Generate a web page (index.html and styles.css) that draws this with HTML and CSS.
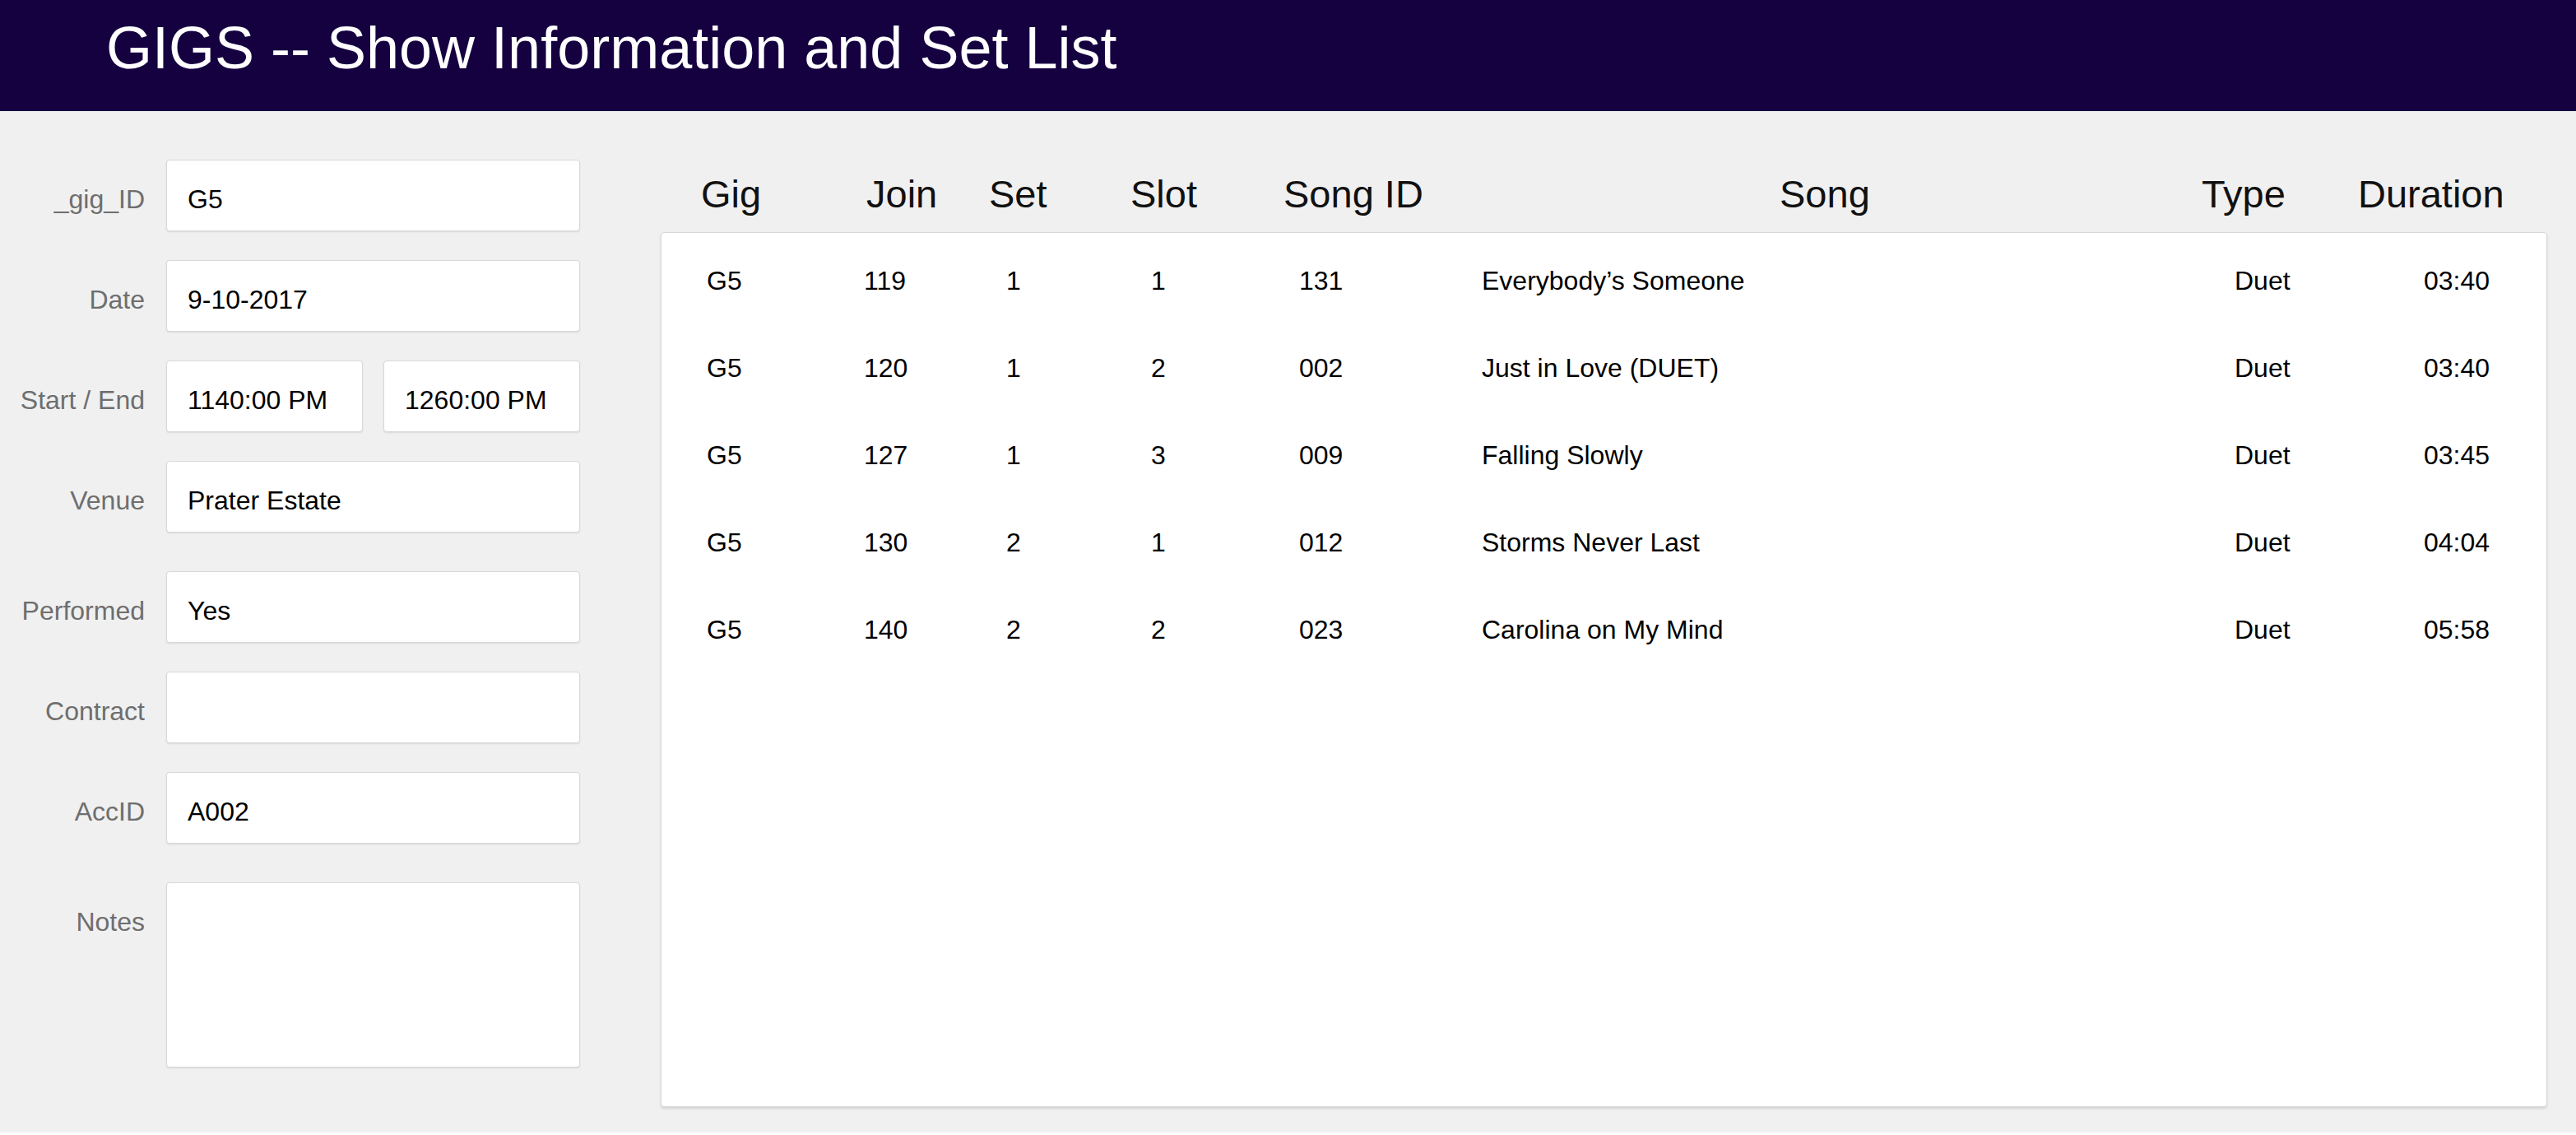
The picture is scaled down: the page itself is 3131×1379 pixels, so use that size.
FILE: index.html
```html
<!DOCTYPE html>
<html lang="en">
<head>
<meta charset="utf-8">
<title>GIGS -- Show Information and Set List</title>
<link rel="stylesheet" href="styles.css">
</head>
<body>
<div class="app">
  <header class="topbar">
    <h1 class="title">GIGS -- Show Information and Set List</h1>
  </header>
  <main class="main">
    <section class="form">
      <div class="label">_gig_ID</div>
      <div class="field">G5</div>

      <div class="label">Date</div>
      <div class="field">9-10-2017</div>

      <div class="label">Start / End</div>
      <div class="pair">
        <div class="field">1140:00 PM</div>
        <div class="field">1260:00 PM</div>
      </div>

      <div class="label">Venue</div>
      <div class="field">Prater Estate</div>

      <div class="label gap-lg">Performed</div>
      <div class="field gap-lg">Yes</div>

      <div class="label">Contract</div>
      <div class="field"></div>

      <div class="label">AccID</div>
      <div class="field">A002</div>

      <div class="label gap-lg">Notes</div>
      <div class="field notes gap-lg"></div>
    </section>

    <section class="setlist">
      <div class="head-row">
        <span>Gig</span>
        <span>Join</span>
        <span>Set</span>
        <span>Slot</span>
        <span>Song ID</span>
        <span>Song</span>
        <span>Type</span>
        <span>Duration</span>
      </div>
      <div class="panel">
        <div class="row">
          <span>G5</span><span>119</span><span>1</span><span>1</span><span>131</span><span>Everybody’s Someone</span><span>Duet</span><span>03:40</span>
        </div>
        <div class="row">
          <span>G5</span><span>120</span><span>1</span><span>2</span><span>002</span><span>Just in Love (DUET)</span><span>Duet</span><span>03:40</span>
        </div>
        <div class="row">
          <span>G5</span><span>127</span><span>1</span><span>3</span><span>009</span><span>Falling Slowly</span><span>Duet</span><span>03:45</span>
        </div>
        <div class="row">
          <span>G5</span><span>130</span><span>2</span><span>1</span><span>012</span><span>Storms Never Last</span><span>Duet</span><span>04:04</span>
        </div>
        <div class="row">
          <span>G5</span><span>140</span><span>2</span><span>2</span><span>023</span><span>Carolina on My Mind</span><span>Duet</span><span>05:58</span>
        </div>
      </div>
    </section>
  </main>
</div>
</body>
</html>
```

FILE: styles.css
```css
html, body {
  margin: 0;
  padding: 0;
  background: #ffffff;
}

body {
  font-family: "Liberation Sans", Arial, Helvetica, sans-serif;
  color: #000;
}

.app {
  height: 1376px;
  background: #f0f0f0;
  overflow: hidden;
}

.topbar {
  height: 135px;
  background: #150040;
  box-sizing: border-box;
  padding: 17px 0 0 129px;
}

.title {
  margin: 0;
  font-size: 72px;
  font-weight: normal;
  line-height: normal;
  color: #ffffff;
  white-space: nowrap;
}

.main {
  display: flex;
  align-items: flex-start;
  padding-top: 59px;
}

/* ---------- left form ---------- */
.form {
  display: grid;
  grid-template-columns: 176px 503px;
  column-gap: 26px;
  row-gap: 35px;
  align-items: start;
  width: 705px;
  flex: none;
}

.label {
  font-size: 32px;
  line-height: normal;
  color: #6e6e6e;
  text-align: right;
  padding-top: 30px;
  white-space: nowrap;
}

.field {
  height: 87px;
  box-sizing: border-box;
  background: #ffffff;
  border: 1px solid #d9d9d9;
  border-radius: 4px;
  box-shadow: 0 1px 2px rgba(0, 0, 0, 0.10);
  padding: 29px 0 0 25px;
  font-size: 32px;
  line-height: normal;
  color: #000;
  white-space: nowrap;
  overflow: hidden;
}

.pair {
  display: flex;
  gap: 25px;
}

.pair .field {
  width: 239px;
}

.gap-lg {
  margin-top: 12px;
}

.notes {
  height: 225px;
}

/* ---------- right set list ---------- */
.setlist {
  margin-left: 98px;
  width: 2293px;
  flex: none;
}

.head-row {
  display: grid;
  grid-template-columns: 201px 149px 172px 186px 603px 513px 190px auto;
  padding: 15px 0 0 49px;
  margin-bottom: 19px;
  font-size: 47px;
  line-height: 54px;
  color: #111;
  white-space: nowrap;
}

.panel {
  height: 1063px;
  box-sizing: border-box;
  background: #ffffff;
  border: 1px solid #d8d8d8;
  border-radius: 4px;
  box-shadow: 0 2px 3px rgba(0, 0, 0, 0.12);
  padding-top: 5px;
}

.row {
  display: grid;
  grid-template-columns: 191px 173px 176px 180px 222px 915px 230px auto;
  padding-left: 55px;
  height: 106px;
  font-size: 32px;
  line-height: 106px;
  color: #000;
  white-space: nowrap;
}
```
